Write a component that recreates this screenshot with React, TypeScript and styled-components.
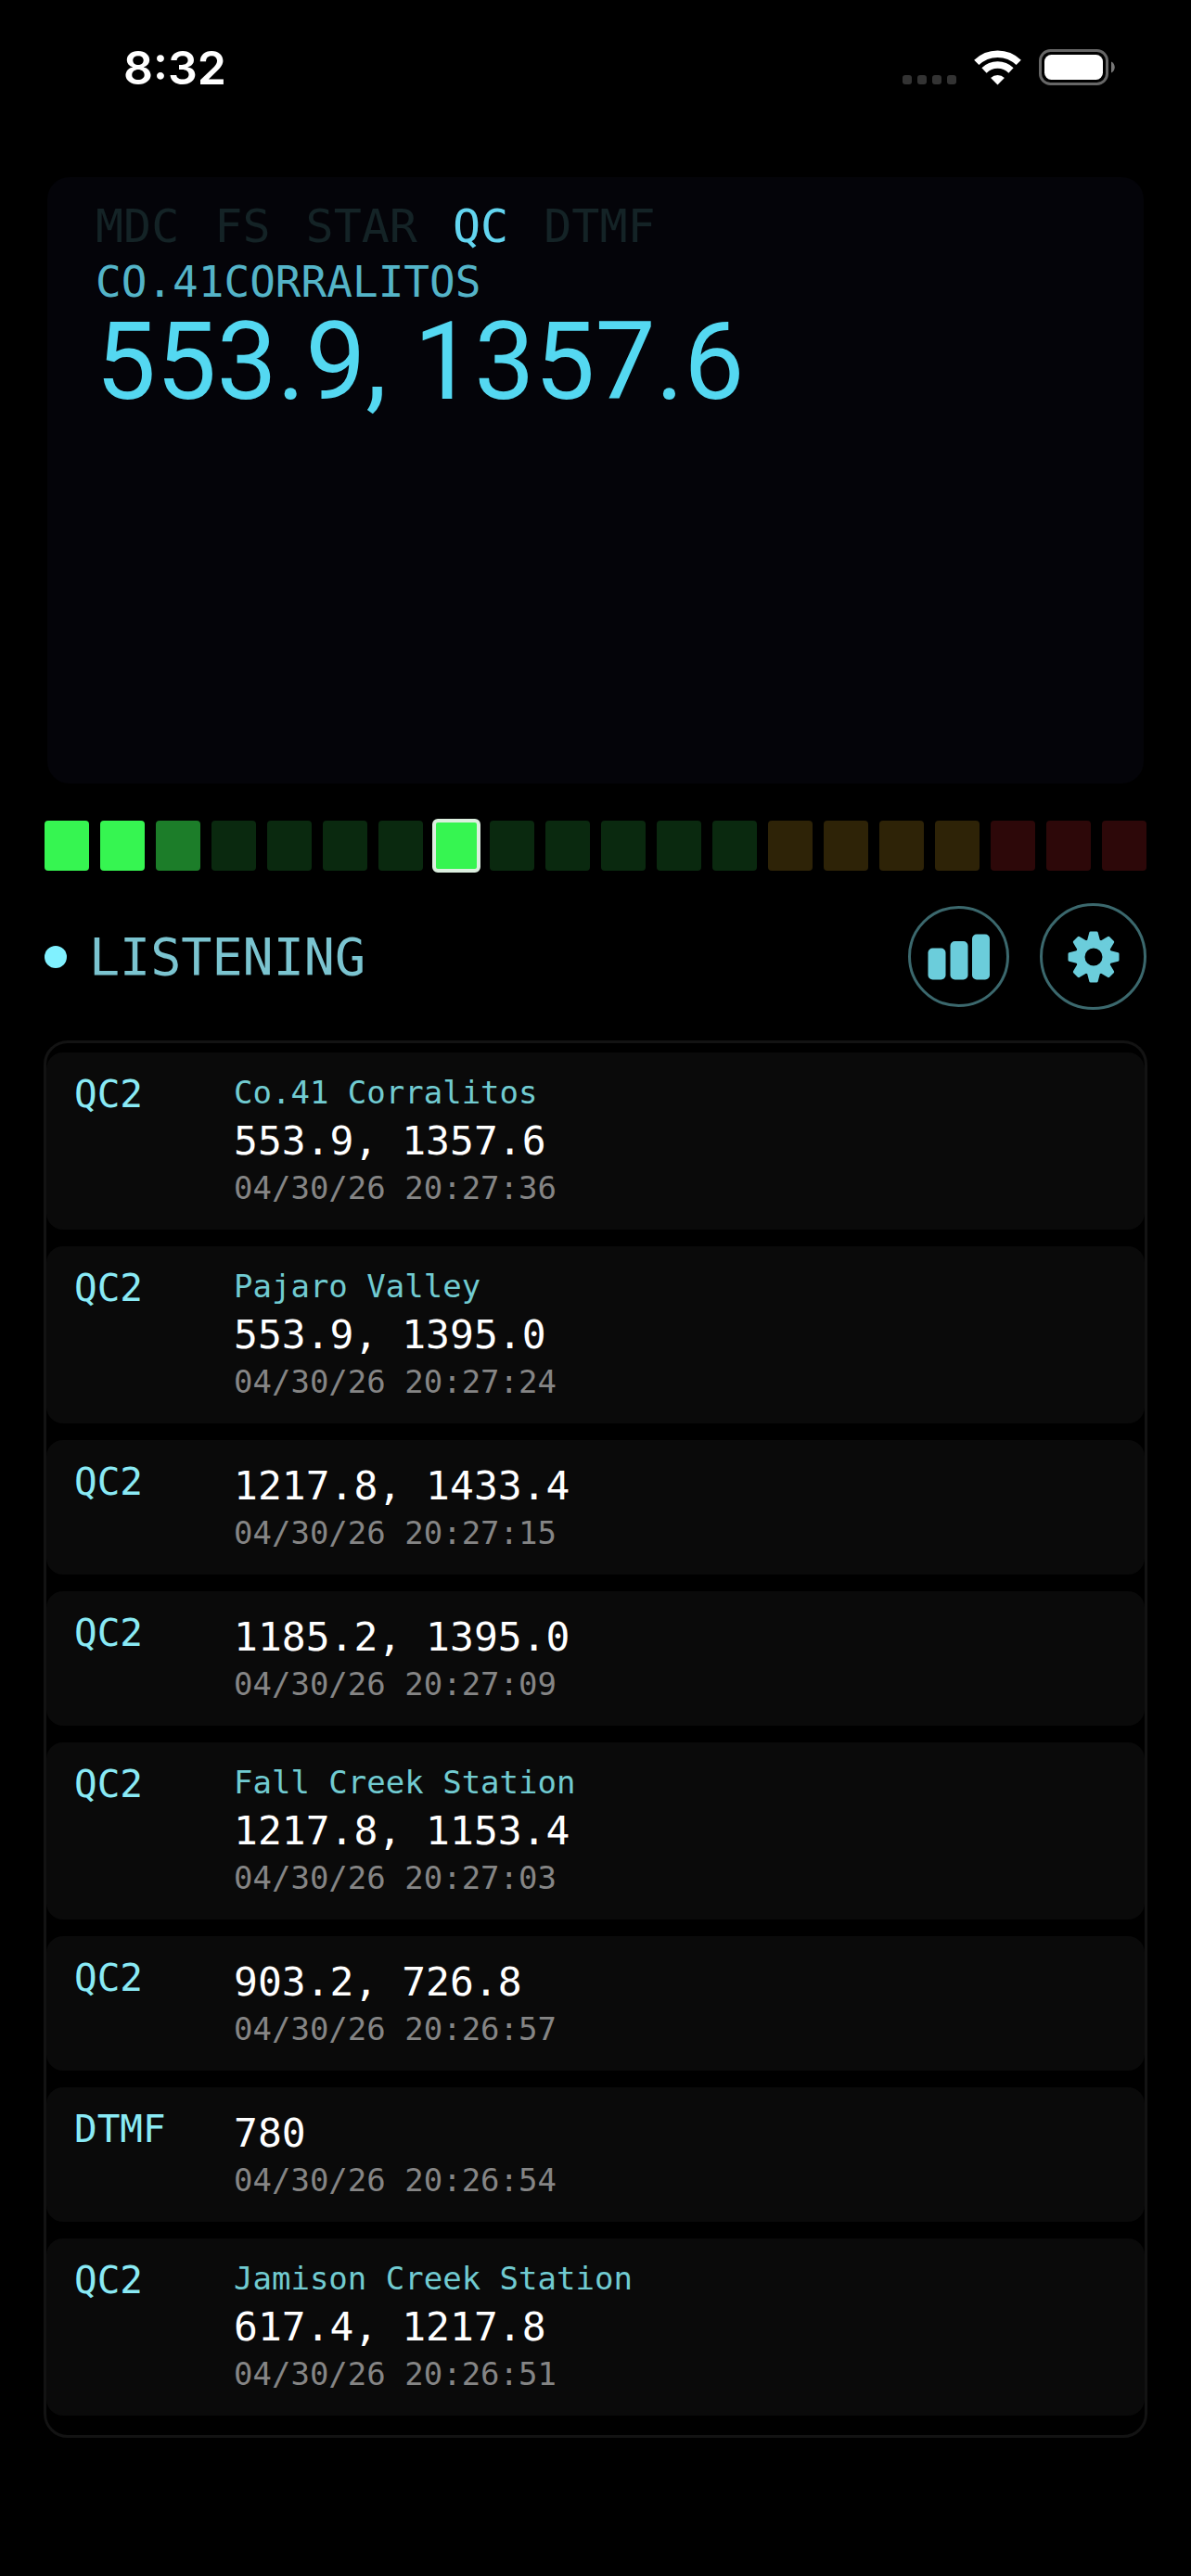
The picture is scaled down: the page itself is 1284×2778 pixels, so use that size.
import React from "react";
import styled, { createGlobalStyle } from "styled-components";

const GlobalStyle = createGlobalStyle`
  *, *::before, *::after { box-sizing: border-box; }
  body { margin: 0; background: #000; }
`;

const mono = `"DejaVu Sans Mono", "Liberation Mono", monospace`;

const Screen = styled.div`
  min-height: 100vh;
  background: #000;
  color: #fff;
  font-family: ${mono};
`;

const StatusBar = styled.header`
  display: flex;
  align-items: flex-start;
  justify-content: space-between;
  height: 191px;
  padding: 42px 82px 0 133px;
`;

const Clock = styled.time`
  font: 600 50px/62px Inter, Roboto, sans-serif;
`;

const StatusIcons = styled.div`
  display: flex;
  align-items: flex-end;
  gap: 19px;
  padding-top: 11px;
`;

const Main = styled.main`
  display: flex;
  flex-direction: column;
  padding: 0 48px 150px;
`;

const Display = styled.section`
  min-height: 654px;
  margin: 0 3px 40px;
  padding: 23px 52px;
  border-radius: 24px;
  background: #040409;
`;

const Modes = styled.ul`
  display: flex;
  gap: 38px;
  margin: 0;
  padding: 0;
  list-style: none;
  font-size: 50px;
  line-height: 60px;
`;

const Mode = styled.li<{ $active: boolean }>`
  color: ${(p) => (p.$active ? "#63d5f0" : "#142326")};
`;

const StationName = styled.div`
  color: #54b4c8;
  font-size: 46px;
  line-height: 60px;
`;

const Tones = styled.div`
  color: #54d8f1;
  font-family: Roboto, "Liberation Sans", sans-serif;
  font-size: 116px;
  line-height: 112px;
`;

const Meter = styled.div`
  display: grid;
  grid-template-columns: repeat(20, 1fr);
  gap: 12px;
`;

const Segment = styled.span<{ $color: string; $peak: boolean }>`
  height: 54px;
  border-radius: 4px;
  background: ${(p) => p.$color};
  outline: ${(p) => (p.$peak ? "4px solid #dcefdf" : "none")};
  outline-offset: -2px;
`;

const Controls = styled.div`
  display: flex;
  align-items: center;
  margin: 35px 0 33px;
`;

const Dot = styled.span`
  width: 24px;
  height: 24px;
  margin-right: 24px;
  border-radius: 50%;
  background: #80f1ff;
`;

const Listening = styled.span`
  flex: 1;
  color: #7bc4d0;
  font-size: 55px;
  line-height: 60px;
`;

const RoundButton = styled.button<{ $size: number }>`
  display: grid;
  place-items: center;
  width: ${(p) => p.$size}px;
  height: ${(p) => p.$size}px;
  margin-left: 33px;
  padding: 0;
  border: 3px solid #3b686d;
  border-radius: 50%;
  background: transparent;
  color: #6bcddb;
  cursor: pointer;
`;

const History = styled.ol`
  display: flex;
  flex-direction: column;
  gap: 18px;
  margin: 0 -1px;
  padding: 10px 0 21px;
  border: 3px solid #131313;
  border-radius: 26px;
  list-style: none;
`;

const Entry = styled.li`
  display: grid;
  grid-template-columns: 172px 1fr;
  padding: 20px 30px 23px;
  border-radius: 18px;
  background: #0a0a0a;
`;

const Badge = styled.span`
  color: #8aeaf5;
  font-size: 41px;
  line-height: 50px;
`;

const Details = styled.div`
  display: flex;
  flex-direction: column;
`;

const Label = styled.span`
  color: #71cbd1;
  font-size: 34px;
  line-height: 46px;
`;

const Value = styled.span`
  font-size: 43px;
  line-height: 58px;
`;

const Stamp = styled.time`
  color: #858585;
  font-size: 34px;
  line-height: 44px;
`;

const modes = ["MDC", "FS", "STAR", "QC", "DTMF"];

const levels = Array.from({ length: 20 }, (_, i) => {
  if (i < 2 || i === 7) return "#36f551";
  if (i === 2) return "#1c7d29";
  if (i < 13) return "#0a290f";
  if (i < 17) return "#2e2307";
  return "#2d0809";
});

const entries = [
  { type: "QC2", label: "Co.41 Corralitos", value: "553.9, 1357.6", time: "04/30/26 20:27:36" },
  { type: "QC2", label: "Pajaro Valley", value: "553.9, 1395.0", time: "04/30/26 20:27:24" },
  { type: "QC2", value: "1217.8, 1433.4", time: "04/30/26 20:27:15" },
  { type: "QC2", value: "1185.2, 1395.0", time: "04/30/26 20:27:09" },
  { type: "QC2", label: "Fall Creek Station", value: "1217.8, 1153.4", time: "04/30/26 20:27:03" },
  { type: "QC2", value: "903.2, 726.8", time: "04/30/26 20:26:57" },
  { type: "DTMF", value: "780", time: "04/30/26 20:26:54" },
  { type: "QC2", label: "Jamison Creek Station", value: "617.4, 1217.8", time: "04/30/26 20:26:51" },
];

const SignalDots = () => (
  <svg width="58" height="12" viewBox="0 0 58 12" fill="#333" aria-hidden="true">
    {[0, 16, 32, 48].map((x) => (
      <rect key={x} x={x} y="1" width="10" height="10" rx="3" />
    ))}
  </svg>
);

const Wifi = () => (
  <svg width="51" height="38" viewBox="0 0 51 38" aria-hidden="true">
    <g fill="none" stroke="#fff" strokeWidth="7.5">
      <path d="M2.8 13.4a32.5 32.5 0 0 1 45.4 0" />
      <path d="M11 22a20.8 20.8 0 0 1 29 0" />
    </g>
    <path d="M25.5 37.4l-7.4-7.4a10.6 10.6 0 0 1 14.8 0z" fill="#fff" />
  </svg>
);

const Battery = () => (
  <svg width="82" height="39" viewBox="0 0 82 39" aria-hidden="true">
    <rect x="1.5" y="1.5" width="72" height="36" rx="11" fill="none" stroke="#666" strokeWidth="3" />
    <rect x="6" y="6" width="63" height="27" rx="7.5" fill="#fff" />
    <path d="M78 13.5c5 2 5 10 0 12z" fill="#777" />
  </svg>
);

const BarsIcon = () => (
  <svg width="68" height="50" viewBox="0 0 68 50" fill="currentColor" aria-hidden="true">
    <rect x="0.5" y="15.5" width="19" height="34" rx="5" />
    <rect x="24.5" y="8" width="19" height="41.5" rx="5" />
    <rect x="48" y="0.5" width="19" height="49" rx="5" />
  </svg>
);

const GearIcon = () => (
  <svg width="56" height="56" viewBox="-28 -28 56 56" aria-hidden="true">
    <g fill="currentColor" stroke="currentColor" strokeWidth="3" strokeLinejoin="round">
      {[0, 45, 90, 135, 180, 225, 270, 315].map((a) => (
        <path key={a} transform={`rotate(${a})`} d="M-5.8 -16L-3.2 -26H3.2L5.8 -16Z" />
      ))}
    </g>
    <circle r="14.5" fill="none" stroke="currentColor" strokeWidth="10" />
  </svg>
);

export default function App() {
  return (
    <Screen>
      <GlobalStyle />
      <StatusBar>
        <Clock>8:32</Clock>
        <StatusIcons>
          <SignalDots />
          <Wifi />
          <Battery />
        </StatusIcons>
      </StatusBar>
      <Main>
        <Display>
          <Modes>
            {modes.map((m) => (
              <Mode key={m} $active={m === "QC"}>{m}</Mode>
            ))}
          </Modes>
          <StationName>CO.41CORRALITOS</StationName>
          <Tones>553.9, 1357.6</Tones>
        </Display>
        <Meter role="img" aria-label="Input level">
          {levels.map((color, i) => (
            <Segment key={i} $color={color} $peak={i === 7} />
          ))}
        </Meter>
        <Controls>
          <Dot />
          <Listening>LISTENING</Listening>
          <RoundButton type="button" $size={109} aria-label="Levels">
            <BarsIcon />
          </RoundButton>
          <RoundButton type="button" $size={115} aria-label="Settings">
            <GearIcon />
          </RoundButton>
        </Controls>
        <History>
          {entries.map((e) => (
            <Entry key={e.time}>
              <Badge>{e.type}</Badge>
              <Details>
                {e.label && <Label>{e.label}</Label>}
                <Value>{e.value}</Value>
                <Stamp>{e.time}</Stamp>
              </Details>
            </Entry>
          ))}
        </History>
      </Main>
    </Screen>
  );
}
